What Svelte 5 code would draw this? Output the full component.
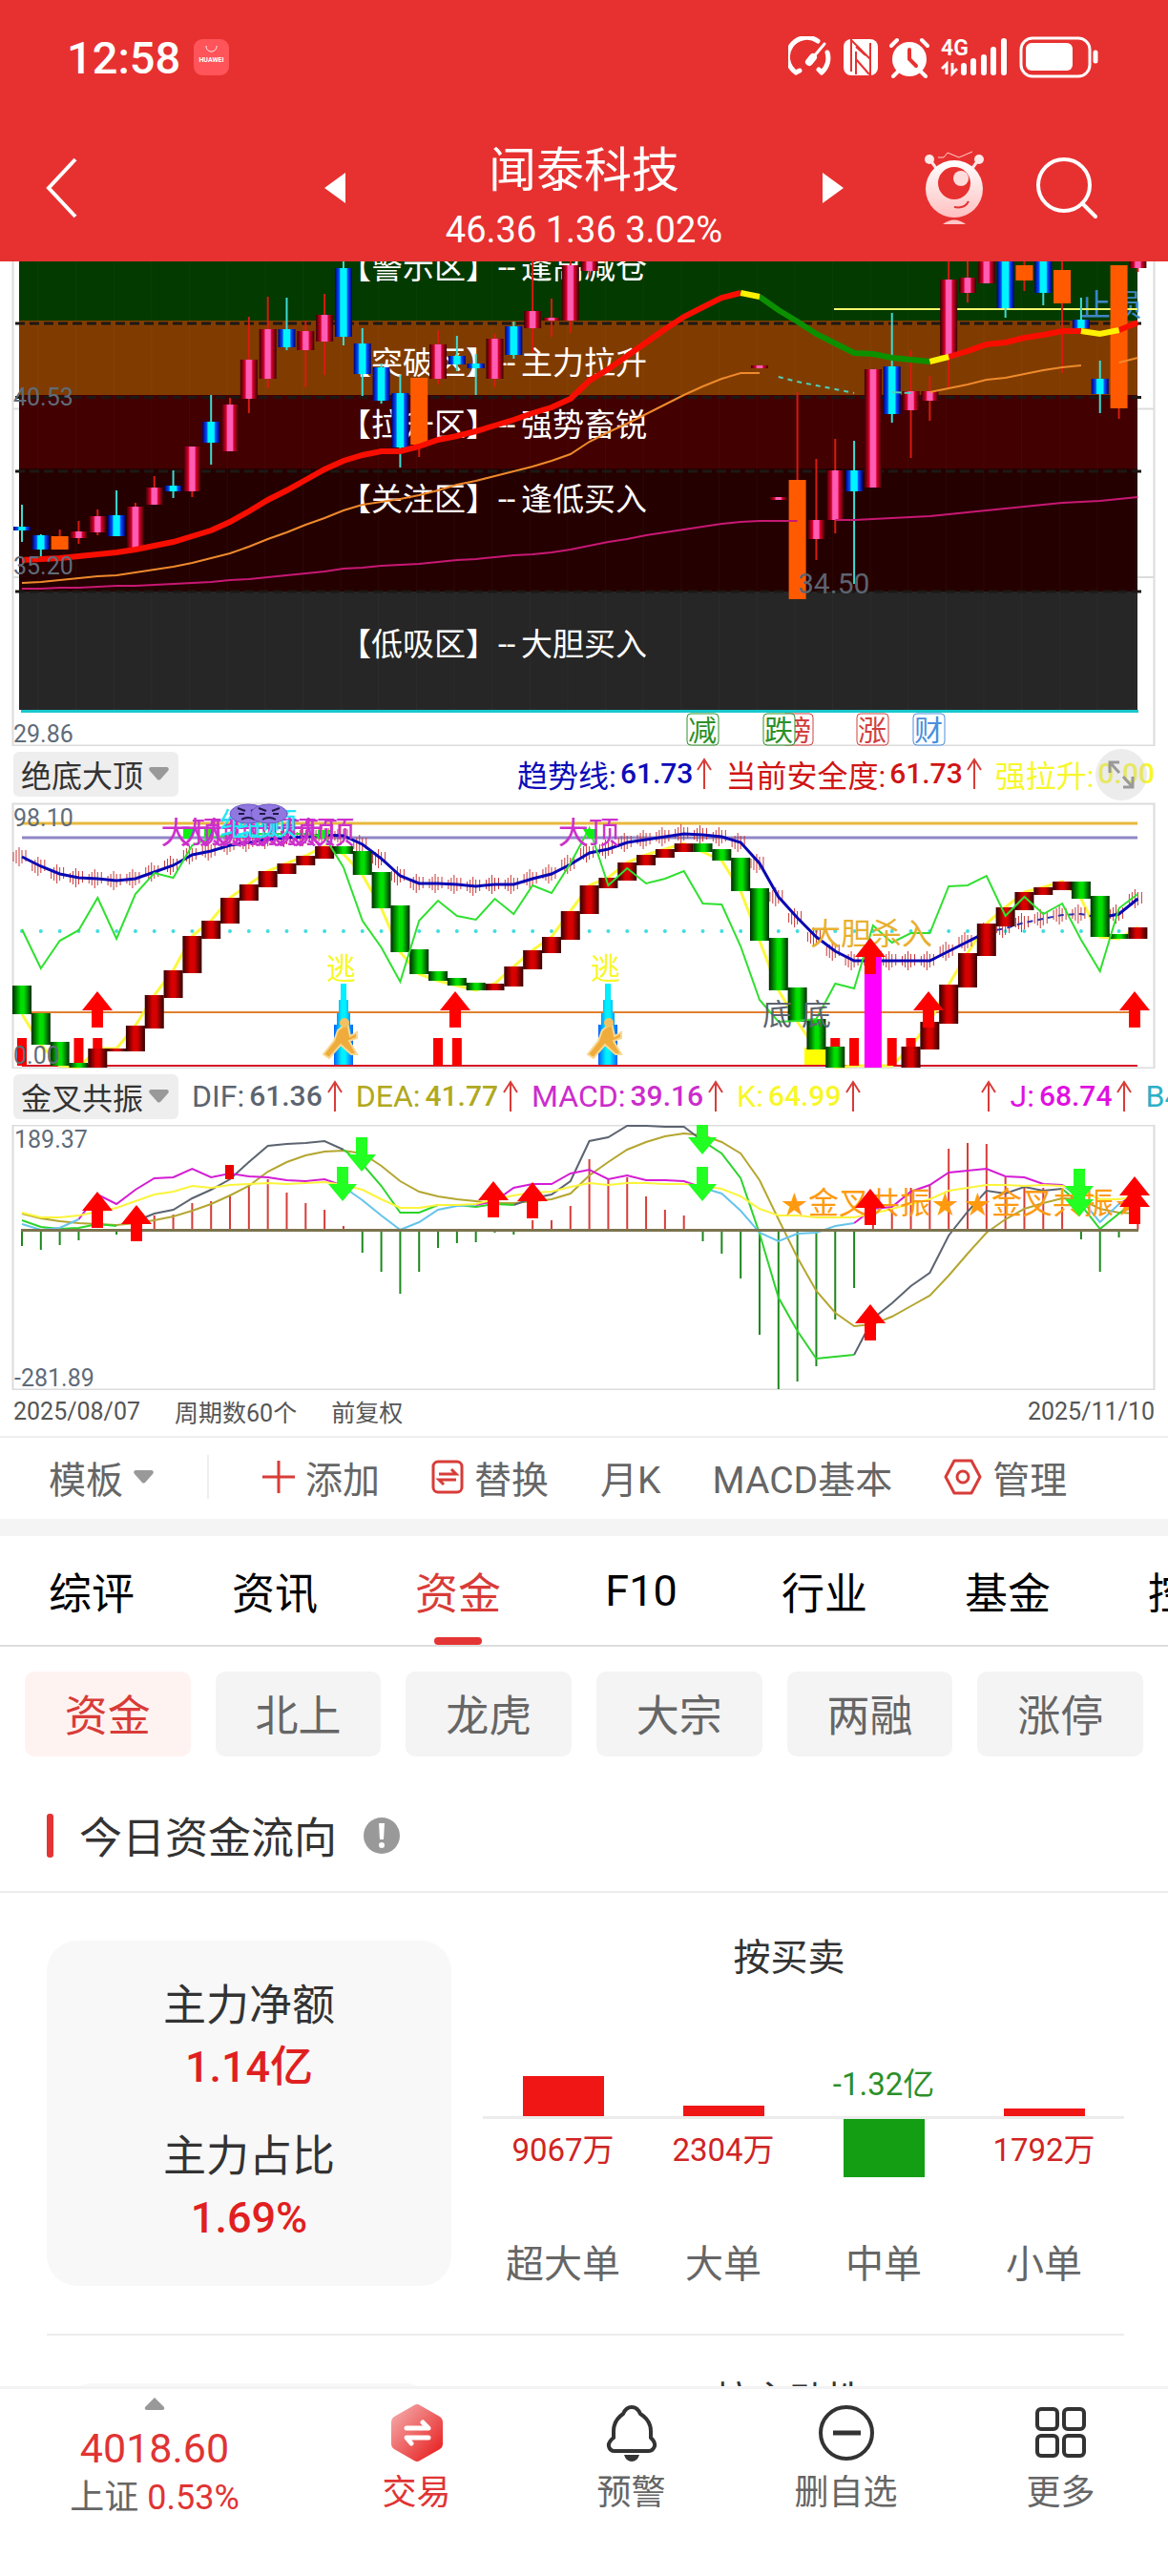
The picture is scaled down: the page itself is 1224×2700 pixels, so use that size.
<script lang="ts">
  type Candle = ['u' | 'd' | 'o', number, number, number, number];
  type Line = { from: number; ys: number[]; color: string; width: number; dash?: string };

  const x = (i: number) => 23 + 19.82 * i;
  const pts = (from: number, ys: number[]) => ys.map((y, k) => `${x(from + k).toFixed(1)},${y}`).join(' ');
  const upArrow = (cx: number, y: number) =>
    `M${cx} ${y}l16 20h-10v18h-12v-18h-10z`;
  const downArrow = (cx: number, y: number) =>
    `M${cx} ${y}l-15 -18h9v-18h12v18h9z`;

  const bands = [
    { y: 4, h: 62, fill: '#033a00' },
    { y: 66, h: 78, fill: '#803c00' },
    { y: 144, h: 77, fill: '#420000' },
    { y: 221, h: 129, fill: '#250000' },
    { y: 350, h: 124, fill: '#262626' },
  ];
  const zones = [
    { y: 22, name: '【警示区】', tip: '逢高减仓' },
    { y: 122, name: '【突破区】', tip: '主力拉升' },
    { y: 187, name: '【拉升区】', tip: '强势畜锐' },
    { y: 265, name: '【关注区】', tip: '逢低买入' },
    { y: 417, name: '【低吸区】', tip: '大胆买入' },
  ];

  // kind, high, body top, body bottom, low
  const candles: (Candle | null)[] = [
    ['d', 259, 282, 286, 298], ['d', 290, 291, 306, 313], ['o', 285, 292, 306, 306], ['u', 276, 287, 294, 300],
    ['u', 264, 271, 288, 291], ['d', 244, 270, 292, 292], ['u', 257, 261, 304, 304], ['u', 229, 241, 259, 259],
    ['d', 223, 239, 245, 252], ['u', 198, 198, 245, 251], ['d', 144, 172, 194, 217], ['u', 147, 154, 203, 203],
    ['u', 62, 107, 148, 163], ['u', 41, 75, 127, 137], ['d', 42, 75, 94, 97], ['u', 66, 77, 97, 136],
    ['u', 38, 60, 88, 123], ['d', 0, 11, 83, 92], ['d', 74, 90, 122, 145], ['d', 111, 115, 150, 153],
    ['d', 123, 142, 199, 220], ['o', 126, 126, 196, 209], ['u', 76, 91, 127, 133], ['d', 82, 103, 112, 119],
    ['d', 101, 111, 116, 144], ['u', 80, 85, 127, 136], ['d', 67, 72, 102, 106], ['u', 0, 56, 74, 100],
    ['u', 43, 63, 66, 83], ['u', 0, 8, 66, 79], ['u', 0, 0, 14, 20], null, null, null, null, null, null, null, null,
    ['u', 113, 113, 116, 116], ['u', 251, 251, 254, 254], ['o', 141, 233, 358, 358], ['u', 211, 275, 295, 317],
    ['u', 190, 223, 275, 289], ['d', 192, 223, 245, 342], ['u', 117, 117, 241, 241], ['d', 58, 114, 164, 173],
    ['u', 97, 140, 160, 210], ['u', 124, 140, 150, 171], ['u', 0, 23, 102, 136], ['u', 0, 21, 37, 47],
    ['u', 0, 0, 27, 27], ['d', 0, 0, 53, 63], ['o', 0, 8, 24, 35], ['d', 0, 0, 37, 50], ['o', 0, 13, 48, 121],
    ['d', 42, 65, 74, 74], ['d', 108, 127, 143, 163], ['o', 8, 8, 158, 169], ['u', 0, 0, 11, 15],
  ];
  const candleFill = { u: 'url(#pink)', d: 'url(#cyan)', o: '#ff5a00' };

  const priceLines: Line[] = [
    { from: 0, color: '#ef8a2c', width: 2, ys: [341, 340, 338, 336, 334, 333, 330, 327, 324, 320, 315, 310, 303, 295, 288, 280, 273, 265, 259, 256, 253, 249, 244, 238, 234, 229, 224, 219, 213, 206, 193, 183, 174, 164, 154, 144, 135, 127, 121, 121] },
    { from: 48, color: '#ef8a2c', width: 2, ys: [141, 137, 133, 128, 126, 122, 118, 115, 113] },
    { from: 58, color: '#ef8a2c', width: 2, ys: [110, 105] },
    { from: 40, color: '#4fd0b8', width: 2, dash: '5 5', ys: [125, 130, 134, 138, 142] },
    { from: 46, color: '#4fd0b8', width: 2, dash: '10 3', ys: [141, 142] },
    { from: 0, color: '#c81874', width: 2, ys: [347, 347, 346, 346, 345, 344, 344, 343, 342, 341, 340, 338, 337, 335, 333, 331, 329, 326, 325, 323, 322, 321, 319, 317, 316, 314, 312, 311, 309, 306, 302, 298, 295, 291, 288, 285, 282, 279, 277, 276, 276, 276] },
    { from: 43, color: '#c81874', width: 2, ys: [275, 275, 274, 273, 272, 271, 269, 267, 265, 263, 261, 259, 257, 256, 255, 253, 251] },
    { from: 0, color: '#f80e00', width: 6, ys: [317, 316, 315, 313, 311, 309, 306, 302, 298, 292, 286, 277, 266, 254, 244, 233, 222, 213, 207, 203, 203, 198, 191, 187, 182, 176, 170, 163, 157, 148, 129, 117, 103, 89, 75, 62, 52, 42, 37] },
    { from: 39, color: '#0c9000', width: 6, ys: [41, 55, 67, 80, 90, 100, 101, 105, 107, 109] },
    { from: 49, color: '#f80e00', width: 6, ys: [104, 98, 91, 89, 84, 81, 77, 77] },
    { from: 58, color: '#f80e00', width: 6, ys: [76, 68] },
    { from: 38, color: '#fff200', width: 6, ys: [37, 41] },
    { from: 48, color: '#fff200', width: 6, ys: [109, 104] },
    { from: 56, color: '#fff200', width: 6, ys: [77, 80, 76] },
  ];
  const tags = [
    { x: 818, text: '榜', color: '#d0403c' },
    { x: 719, text: '减', color: '#2c9028' },
    { x: 799, text: '跌', color: '#2c9028' },
    { x: 897, text: '涨', color: '#d0403c' },
    { x: 956, text: '财', color: '#4a8fdc' },
  ];

  const trend = [118, 128, 136, 140, 141, 143, 141, 134, 127, 116, 112, 106, 103, 100, 98, 97, 95, 96, 105, 120, 138, 146, 146, 147, 149, 147, 147, 141, 136, 126, 114, 110, 103, 100, 97, 94, 95, 97, 103, 125, 160, 182, 202, 217, 227, 227, 227, 227, 227, 217, 207, 197];
  const trendEnd = [197, 193, 187, 183, 179, 178, 182, 178, 162];
  const safety = [194, 235, 206, 195, 161, 204, 157, 135, 140, 106, 98, 95, 94, 94, 94, 94, 97, 129, 185, 213, 249, 185, 164, 180, 184, 162, 178, 148, 156, 125, 88, 148, 130, 146, 141, 133, 167, 168, 212, 268, 291, 290, 288, 251, 256, 190, 208, 198, 198, 149, 148, 138, 180, 160, 178, 167, 205, 238, 172, 157];
  const blocks: (['g' | 'r', number, number] | null)[] = [
    ['g', 253, 283], ['g', 282, 315], ['g', 312, 337], ['g', 334, 339], ['r', 319, 339], ['r', 319, 322], ['r', 295, 322],
    ['r', 263, 298], ['r', 237, 266], ['r', 201, 240], ['r', 185, 204], ['r', 161, 188], ['r', 147, 164], ['r', 133, 150],
    ['r', 125, 136], ['r', 117, 127], ['r', 107, 120], ['g', 107, 115], ['g', 112, 137], ['g', 134, 172], ['g', 169, 218],
    ['g', 215, 241], ['g', 238, 248], ['g', 245, 253], ['g', 250, 258], ['r', 251, 258], ['r', 233, 254], ['r', 216, 236],
    ['r', 202, 219], ['r', 175, 205], ['r', 148, 178], ['r', 140, 151], ['r', 124, 143], ['r', 116, 127], ['r', 110, 119],
    ['r', 104, 113], ['g', 104, 113], ['g', 110, 122], ['g', 119, 154], ['g', 151, 206], ['g', 203, 258], ['g', 255, 291],
    ['g', 288, 320], ['g', 317, 339], null, null, null, ['r', 317, 339], ['r', 291, 320], ['r', 252, 293], ['r', 219, 255],
    ['r', 188, 222], ['r', 171, 191], ['r', 155, 174], ['r', 150, 158], ['r', 144, 153], ['g', 144, 162], ['g', 159, 202],
    ['g', 199, 204], ['r', 192, 204],
  ];
  const step = blocks.map((b) => (b ? (b[0] === 'g' ? b[2] : b[1]) : 337));
  const redBars = [0, 3, 4, 22, 23, 43, 44, 46, 47];
  const spikes = [360, 637];

  const hist = [186, 190, 185, 180, 169, 174, 169, 154, 153, 141, 139, 132, 122, 116, 130, 141, 148, 165, 193, 213, 236, 213, 188, 183, 182, 172, 174, 159, 159, 144, 95, 116, 114, 134, 148, 154, 181, 194, 220, 279, 336, 328, 312, 263, 230, 150, 147, 125, 122, 84, 78, 79, 114, 125, 125, 145, 179, 213, 177, 150];
  const waves: Line[] = [
    { from: 0, color: '#b4a630', width: 2, ys: [152, 157, 160, 162, 163, 164, 162, 159, 155, 149, 142, 133, 123, 108, 98, 91, 87, 86, 89, 102, 118, 129, 134, 137, 139, 141, 141, 139, 137, 131, 112, 98, 85, 77, 71, 68, 70, 77, 89, 117, 158, 198, 233, 256, 270, 268, 260, 249, 238, 217, 194, 172, 158, 147, 141, 136, 137, 147, 151, 152] },
    { from: 6, color: '#5c6470', width: 2, ys: [160, 152, 148, 136, 127, 116, 98, 81, 79, 78, 76, 85] },
    { from: 26, color: '#5c6470', width: 2, ys: [143, 136, 132, 118, 76, 72, 60, 60, 61, 61, 76] },
    { from: 44, color: '#5c6470', width: 2, ys: [300, 262, 246, 228, 214, 175, 150, 128, 131, 124, 128, 126] },
    { from: 0, color: '#2cd42c', width: 2, ys: [159, 166, 168, 167, 163, 165] },
    { from: 17, color: '#2cd42c', width: 2, ys: [85, 100, 123, 151, 151, 143, 143, 145, 142, 143] },
    { from: 36, color: '#2cd42c', width: 2, ys: [76, 89, 115, 173, 240, 275, 304, 302, 300] },
    { from: 55, color: '#2cd42c', width: 2, ys: [126, 143, 168, 152, 137] },
    { from: 3, color: '#d41cd4', width: 2, ys: [158, 132, 142, 127, 115, 114, 105, 114, 110, 113, 114, 117, 118, 116, 123] },
    { from: 24, color: '#d41cd4', width: 2, ys: [143, 139, 125, 121, 121, 110, 106, 116, 112, 117, 117, 118, 125] },
    { from: 44, color: '#d41cd4', width: 2, ys: [162, 147, 145, 129, 122, 109, 107, 105, 113, 114, 121, 122, 133] },
    { from: 58, color: '#d41cd4', width: 2, ys: [142, 130] },
    { from: 0, color: '#66c4ea', width: 2, ys: [163, 169, 167, 158] },
    { from: 17, color: '#66c4ea', width: 2, ys: [124, 138, 154, 169, 161, 148, 144, 143] },
    { from: 36, color: '#66c4ea', width: 2, ys: [125, 131, 149, 172, 181, 173, 172, 165, 162] },
    { from: 55, color: '#66c4ea', width: 2, ys: [122, 137, 161, 142] },
    { from: 0, color: '#fbf43c', width: 2, ys: [151, 156, 156, 154, 150, 146, 139, 132, 129, 123, 125, 122, 121, 120, 121, 120, 119, 122, 127, 137, 146, 146, 143, 143, 142, 137, 133, 130, 129, 124, 120, 122, 120, 120, 121, 121, 123, 126, 134, 147, 154, 154, 156, 156, 156, 152, 147, 142, 137, 128, 125, 122, 122, 123, 122, 123, 128, 137, 137, 134] },
  ];
  const ups = [[102, 129], [143, 143], [517, 118], [558, 119], [912, 126], [912, 247], [1189, 113], [1189, 125]];
  const downs = [[379, 108], [359, 139], [736, 90], [736, 139], [1131, 141], [1131, 155]];

  const trendLegend = [
    { name: '趋势线:', value: '61.73', color: '#0c0cb8', rise: true },
    { name: '当前安全度:', value: '61.73', color: '#d01414', rise: true },
    { name: '强拉升:', value: '0.00', color: '#f7f72a', rise: false },
  ];
  const macdLegend = [
    { name: 'DIF:', value: '61.36', color: '#5c6470' },
    { name: 'DEA:', value: '41.77', color: '#b0a820' },
    { name: 'MACD:', value: '39.16', color: '#cc2ccc' },
    { name: 'K:', value: '64.99', color: '#f7f72a' },
    { name: '', value: '', color: '#fff' },
    { name: 'J:', value: '68.74', color: '#e010e0' },
  ];

  const tabs = ['综评', '资讯', '资金', 'F10', '行业', '基金', '控股'];
  const subTabs = ['资金', '北上', '龙虎', '大宗', '两融', '涨停'];
  let tab = $state('资金');
  let subTab = $state('资金');

  const orders = [
    { name: '超大单', value: '9067万', size: 42, up: true },
    { name: '大单', value: '2304万', size: 11, up: true },
    { name: '中单', value: '-1.32亿', size: 61, up: false },
    { name: '小单', value: '1792万', size: 8, up: true },
  ];
</script>

{#snippet polys(lines: Line[])}
  {#each lines as l}
    <polyline points={pts(l.from, l.ys)} fill="none" stroke={l.color} stroke-width={l.width} stroke-dasharray={l.dash} />
  {/each}
{/snippet}

{#snippet riseIcon()}
  <svg class="rise" viewBox="0 0 16 34"><path d="M8 33V3M1 13L8 2l7 11" /></svg>
{/snippet}

<div class="app">
  <header>
    <div class="status">
      <span class="clock">12:58</span>
      <svg width="37" height="38" viewBox="0 0 37 38">
        <rect width="37" height="38" rx="9" fill="#ff5459" />
        <path d="M13 7c0 8 11 8 11 0" fill="none" stroke="#fff" stroke-width="1" />
        <text x="18.5" y="24" font-size="7" font-weight="700" fill="#fff" text-anchor="middle">HUAWEI</text>
      </svg>
      <div class="system">
        <svg width="46" height="44" viewBox="0 0 46 44" fill="none" stroke="#fff" stroke-width="5" stroke-linecap="round">
          <path d="M31 5A19 19 0 0 0 8 38M41 17a20 20 0 0 1-6 21M8 38l4-2M35 38l-3-3" />
          <path d="M22 27L38 8" stroke-width="3" /><path d="M22 27l4-5" stroke-width="8" />
        </svg>
        <svg width="36" height="44" viewBox="0 0 36 44">
          <rect y="3" width="36" height="38" rx="8" fill="#fff" />
          <path d="M8 3v34M28 7v34" stroke="#e73130" stroke-width="2" />
          <path d="M8 4l20 20M13 16v24M13 24l14 16M23 20l-10-9" fill="none" stroke="#e73130" stroke-width="2" />
        </svg>
        <svg width="42" height="44" viewBox="0 0 42 44" stroke-linecap="round">
          <circle cx="21" cy="24" r="18" fill="#fff" />
          <path d="M2 10l6-6M40 10l-6-6M9 37l-5 5M33 37l5 5" stroke="#fff" stroke-width="4" />
          <path d="M21 14v10l7 7" fill="none" stroke="#e73130" stroke-width="4" />
        </svg>
        <svg width="70" height="44" viewBox="0 0 70 44">
          <text x="0" y="20" font-size="23" font-weight="600" fill="#fff">4G</text>
          <path d="M1 34l5-5v11M17 34l-5 5V28" fill="none" stroke="#fff" stroke-width="3" />
          <path d="M24 31v7M34 26v12M45 22v16M55 14v24M66 5v33" stroke="#fff" stroke-width="6" stroke-linecap="round" />
        </svg>
        <svg width="84" height="44" viewBox="0 0 84 44">
          <rect x="2" y="2" width="72" height="40" rx="12" fill="none" stroke="#fff" stroke-width="3" />
          <rect x="7" y="7" width="49" height="29" rx="6" fill="#fff" />
          <path d="M80 17v9" stroke="#fff" stroke-width="5" stroke-linecap="round" />
        </svg>
      </div>
    </div>
    <div class="nav">
      <div class="side left">
        <button aria-label="返回"><svg width="34" height="64" viewBox="0 0 34 64"><path d="M31 2L3 32l28 30" fill="none" stroke="#fff" stroke-width="4" /></svg></button>
        <button aria-label="上一只"><svg width="22" height="32" viewBox="0 0 22 32"><path d="M22 0v32L0 16z" fill="#fff" /></svg></button>
      </div>
      <div class="stock">
        <h1>闻泰科技</h1>
        <p>46.36 1.36 3.02%</p>
      </div>
      <div class="side right">
        <button aria-label="下一只"><svg width="22" height="32" viewBox="0 0 22 32"><path d="M0 0v32l22-16z" fill="#fff" /></svg></button>
        <button class="robot" aria-label="智能助手">
          <svg width="64" height="78" viewBox="0 0 64 78">
            <defs><linearGradient id="skin" x2="0" y2="1"><stop stop-color="#fff" /><stop offset="1" stop-color="#ffc0c0" /></linearGradient></defs>
            <path d="M7 10l8 11M57 10l-8 11" stroke="#ffe4e4" stroke-width="3" />
            <circle cx="6" cy="9" r="5" fill="#ffe8e8" /><circle cx="58" cy="9" r="5" fill="#ffe8e8" />
            <path d="M15 7h6l4-5 12 5 14-6" fill="none" stroke="#ffd0d0" stroke-width="1" />
            <circle cx="32" cy="40" r="30" fill="url(#skin)" />
            <circle cx="32" cy="34" r="17" fill="#e73130" /><circle cx="39" cy="29" r="8" fill="#ffdcdc" />
            <path d="M32 59q11 2 15-6" fill="none" stroke="#e73130" stroke-width="2" />
            <path d="M20 77q12-9 24 0z" fill="#ffc8c8" />
          </svg>
        </button>
        <button aria-label="搜索"><svg width="66" height="66" viewBox="0 0 66 66" fill="none" stroke="#fff" stroke-width="4" stroke-linecap="round"><circle cx="30" cy="30" r="27" /><path d="M49 49l14 14" /></svg></button>
      </div>
    </div>
  </header>

  <main>
    <svg class="chart" viewBox="0 4 1224 508">
      <defs>
        <linearGradient id="pink"><stop stop-color="#3a0000" /><stop offset=".28" stop-color="#d8002c" /><stop offset=".36" stop-color="#ff5cb4" /><stop offset=".64" stop-color="#ff5cb4" /><stop offset=".72" stop-color="#d8002c" /><stop offset="1" stop-color="#3a0000" /></linearGradient>
        <linearGradient id="cyan"><stop stop-color="#000078" /><stop offset=".25" stop-color="#0050ff" /><stop offset=".33" stop-color="#00f4ff" /><stop offset=".67" stop-color="#00f4ff" /><stop offset=".75" stop-color="#0050ff" /><stop offset="1" stop-color="#000078" /></linearGradient>
        <linearGradient id="green"><stop stop-color="#002a00" /><stop offset=".45" stop-color="#00e000" /><stop offset=".6" stop-color="#00e000" /><stop offset="1" stop-color="#002a00" /></linearGradient>
        <linearGradient id="red"><stop stop-color="#300000" /><stop offset=".4" stop-color="#d80000" /><stop offset=".6" stop-color="#d80000" /><stop offset="1" stop-color="#300000" /></linearGradient>
        <linearGradient id="spike"><stop stop-color="#0060ff" /><stop offset=".4" stop-color="#00f0ff" /><stop offset=".6" stop-color="#00f0ff" /><stop offset="1" stop-color="#0060ff" /></linearGradient>
      </defs>
      <path d="M13.5 0V511.500H1209.500V0M13.500 158.500H1209M13.500 335H1209" class="frame" />
      {#each bands as b}<rect x="20" y={b.y} width="1172" height={b.h} fill={b.fill} />{/each}
      {#each candles as _, i}{#if i % 2 === 0}<path d="M{x(i) + 17} 4V474" stroke="#fff" stroke-opacity=".03" />{/if}{/each}
      <path d="M16 69H1198M16 146.500H1198M16 224H1198M16 350H1198" stroke="#1c1815" stroke-width="3" stroke-dasharray="10 5" />
      <path d="M22 475.500H1193" stroke="#18c8cc" stroke-width="3" />
      {#each zones as z}
        <text class="zone" y={z.y}><tspan x="356">{z.name}</tspan><tspan x="522">--</tspan><tspan x="546">{z.tip}</tspan></text>
      {/each}
      <text x="1132" y="61" font-size="32" fill="#3f86c4">止损</text>
      <path d="M874 54H1192" stroke="#f4f86c" stroke-width="2" />
      {#each candles as c, i}
        {#if c}
          <path d="M{x(i)} {c[1]}V{c[4]}" stroke={c[0] === 'd' ? '#3cdcd4' : '#d81a10'} stroke-width="2" />
          <rect x={x(i) - 9} y={c[2]} width="18" height={c[3] - c[2]} fill={candleFill[c[0]]} />
        {/if}
      {/each}
      {@render polys(priceLines)}
      <text class="axis" x="14" y="155">40.53</text>
      <text class="axis" x="14" y="332">35.20</text>
      <text class="axis" x="14" y="508">29.86</text>
      <text x="836" y="352" font-size="30" fill="#5c6470">34.50</text>
      {#each tags as t}
        <rect x={t.x + 1} y="478" width="33" height="33" rx="4" fill="#fff" stroke={t.color} />
        <text x={t.x + 2} y="506" font-size="30" fill={t.color}>{t.text}</text>
      {/each}
    </svg>

    <div class="legend end">
      <button class="picker">绝底大顶<svg class="caret" viewBox="0 0 21 14"><path d="M2 0h17q3 1 1 4l-8 9q-2 1-3 0L1 4Q-1 1 2 0z" /></svg></button>
      {#each trendLegend as l}
        <span class="item" style:color={l.color}>{l.name}<b>{l.value}</b>{#if l.rise}{@render riseIcon()}{/if}</span>
      {/each}
      <button class="expand" aria-label="全屏"><svg width="28" height="30" viewBox="0 0 28 30" fill="none" stroke="#999" stroke-width="3"><path d="M2 13V2h10M2 2l10 11M26 17v11H16M26 28L16 17" /></svg></button>
    </div>

    <svg class="chart" viewBox="0 61 1224 279">
      <path d="M13.500 62.500H1209.500V339.500H13.500Z" class="frame" />
      <path d="M23 83H1192" stroke="#e8b83c" stroke-width="3" />
      <path d="M23 98H1192" stroke="#9088c8" stroke-width="3" />
      {#each blocks as _, i}<circle cx={x(i)} cy="196" r="2" fill="#40dce0" />{/each}
      <path d="M23 281H1192" stroke="#e08030" stroke-width="2" />
      <path d="M23 337H1192" stroke="#d81424" stroke-width="2" />
      <polyline points={pts(0, step)} fill="none" stroke="#fbf83c" stroke-width="3" />
      {#each redBars as i}<rect x={x(i) - 5} y="308" width="10" height="29" fill="#f80000" />{/each}
      <rect x="843" y="318" width="23" height="18" fill="#ff0" />
      {#each [...trend, ...trendEnd.slice(1)] as y, i}
        <path d="M{x(i) - 9} {y - 5}v10M{x(i) - 6} {y - 7}v14M{x(i) - 3} {y - 10}v20M{x(i)} {y - 7}v14M{x(i) + 4} {y - 7}v12" stroke="#c83838" />
      {/each}
      <polyline points={pts(0, trend)} fill="none" stroke="#0808b4" stroke-width="3" />
      <polyline points={pts(51, trendEnd.slice(0, 7))} fill="none" stroke="#3030a8" stroke-width="2" stroke-dasharray="6 5" />
      <polyline points={pts(57, trendEnd.slice(6))} fill="none" stroke="#0808b4" stroke-width="3" />
      {#each blocks as b, i}
        {#if b}<rect x={x(i) - 10} y={b[1]} width="20" height={b[2] - b[1]} fill={b[0] === 'g' ? 'url(#green)' : 'url(#red)'} />{/if}
      {/each}
      <rect x={x(45) - 9} y="217" width="18" height="122" fill="#f0f" />
      <polyline points={pts(0, safety)} fill="none" stroke="#30e030" stroke-width="2" />
      <path d="M192 89h12l-4 10h-8zM214 89h9v9h-9zM333 90h14l-5 9h-9zM611 89h15v10h-9z" fill="#10f010" />
      {#each [8, 9, 10, 11, 12, 13, 14, 15, 29] as i}<text x={x(i) - 13} y="104" font-size="32" fill="#cc30cc">大顶</text>{/each}
      {#each [230, 247] as tx}<text x={tx} y="95" font-size="32" fill="#20e8f4">绝顶</text>{/each}
      {#each [260, 282] as cx}
        <ellipse {cx} cy="73" rx="19" ry="10" fill="#9078e0" stroke="#7058c8" />
        <path d="M{cx - 11} 67l8 3M{cx + 11} 67l-8 3M{cx - 10} 73h6M{cx + 4} 73h6M{cx - 7} 79q7-4 14 0" fill="none" stroke="#201848" stroke-width="2" />
      {/each}
      {#each spikes as s}
        <text x={s - 18} y="246" font-size="31" fill="#f7f72a">逃</text>
        <path d="M{s - 3} 251h6v17h2v14h2v12h3v42h-20v-42h3v-12h2v-14h2z" fill="url(#spike)" />
        <path d="M{s - 6} 300l10-8 3 14 7-4v6l-8 3 8 14h-6l-11-10-12 14-6-4 11-14z" fill="#efac3c" stroke="#f8d890" stroke-width="2" />
        <circle cx={s + 1} cy="292" r="5" fill="#f4c060" />
      {/each}
      <text x="799" y="294" font-size="31" fill="#5c6470">底</text>
      <text x="840" y="294" font-size="31" fill="#5c6470">底</text>
      <text x="849" y="210" font-size="32" fill="#e8b030">大胆杀入</text>
      {#each [[102, 259], [477, 259], [973, 259], [1189, 259], [912, 203]] as [cx, y]}<path d={upArrow(cx, y)} fill="#f00" />{/each}
      <text class="axis" x="14" y="86">98.10</text>
      <text class="axis" x="14" y="335">0.00</text>
    </svg>

    <div class="legend">
      <button class="picker">金叉共振<svg class="caret" viewBox="0 0 21 14"><path d="M2 0h17q3 1 1 4l-8 9q-2 1-3 0L1 4Q-1 1 2 0z" /></svg></button>
      {#each macdLegend as l}
        <span class="item" class:blank={!l.name} style:color={l.color}>{l.name} <b>{l.value}</b>{@render riseIcon()}</span>
      {/each}
      <span class="item" style:color="#2cb0c8">B4:</span>
    </div>

    <svg class="chart" viewBox="0 59 1224 278">
      <path d="M13.500 59.500H1209.500V336.500H13.500Z" class="frame" />
      {#each hist as y, i}<path d="M{x(i)} 169V{y}" stroke={y < 169 ? '#d83c38' : '#1c881c'} stroke-width="2" />{/each}
      {@render polys(waves)}
      <path d="M22 169.500H1193" stroke="#7c7450" stroke-width="3" />
      <rect x="236" y="101" width="9" height="15" fill="#e80000" />
      <g fill="#ff9a10">
        {#each [821, 1013] as sx}
          <text x={sx - 2} y="152" font-size="27">★</text>
          <text x={sx + 26} y="152" font-size="32">金叉共振</text>
          <text x={sx + 156} y="152" font-size="27">★</text>
        {/each}
      </g>
      {#each ups as [cx, y]}<path d={upArrow(cx, y)} fill="#f00" />{/each}
      {#each downs as [cx, y]}<path d={downArrow(cx, y)} fill="#2f2" />{/each}
      <text class="axis" x="15" y="83">189.37</text>
      <text class="axis" x="15" y="333">-281.89</text>
    </svg>

    <div class="dates">
      <span>2025/08/07</span><span>周期数60个</span><span>前复权</span><span>2025/11/10</span>
    </div>

    <div class="tools">
      <button>模板<svg class="caret" viewBox="0 0 21 14"><path d="M2 0h17q3 1 1 4l-8 9q-2 1-3 0L1 4Q-1 1 2 0z" /></svg></button>
      <i class="sep"></i>
      <button><svg width="34" height="34" viewBox="0 0 34 34"><path d="M17 0v34M0 17h34" /></svg>添加</button>
      <button><svg width="34" height="36" viewBox="0 0 34 36"><rect x="2" y="2" width="30" height="32" rx="5" /><path d="M8 15h18l-5-5M26 21H8l5 5" /></svg>替换</button>
      <button>月K</button>
      <button>MACD基本</button>
      <button><svg width="40" height="38" viewBox="0 0 40 38"><path d="M11 2h18l9 17-9 17H11L2 19z" stroke-linejoin="round" /><circle cx="20" cy="19" r="6" /></svg>管理</button>
    </div>

    <nav class="tabs">
      {#each tabs as t}
        <button class:active={t === tab} onclick={() => (tab = t)}>{t}</button>
      {/each}
    </nav>
    <div class="subtabs">
      {#each subTabs as t}
        <button class:active={t === subTab} onclick={() => (subTab = t)}>{t}</button>
      {/each}
    </div>

    <h2>今日资金流向
      <svg width="40" height="40" viewBox="0 0 40 40"><circle cx="20" cy="20" r="19" fill="#999" /><path d="M17 7h6l-1 17h-4z" fill="#fff" /><circle cx="20" cy="30" r="3" fill="#fff" /></svg>
    </h2>

    <section class="flow">
      <div class="card">
        <span>主力净额</span><strong>1.14亿</strong>
        <span>主力占比</span><strong>1.69%</strong>
      </div>
      <div class="orders">
        <h3>按买卖</h3>
        <div class="bars">
          {#each orders as o}
            <div class="col" class:down={!o.up}>
              <div class="half top">{#if o.up}<i style:height="{o.size}px"></i>{:else}<em>{o.value}</em>{/if}</div>
              <div class="half">{#if o.up}<em>{o.value}</em>{:else}<i style:height="{o.size}px"></i>{/if}</div>
              <span>{o.name}</span>
            </div>
          {/each}
        </div>
      </div>
    </section>
    <section class="flow next">
      <div class="card"></div>
      <div class="orders"><h3>按主动性</h3></div>
    </section>
  </main>

  <footer>
    <button class="index">
      <svg width="22" height="13" viewBox="0 0 22 13"><path d="M11 0l10 10q1 3-2 3H3q-3 0-2-3z" fill="#999" /></svg>
      <strong>4018.60</strong>
      <span>上证 <b>0.53%</b></span>
    </button>
    <button class="trade">
      <svg width="60" height="60" viewBox="0 0 60 60">
        <defs><linearGradient id="hex" y2="1"><stop offset=".1" stop-color="#f4a4a4" /><stop offset=".9" stop-color="#e82424" /></linearGradient></defs>
        <path d="M27 1q3-2 6 0l21 12q3 2 3 5v24q0 3-3 5L33 59q-3 2-6 0L6 47q-3-2-3-5V18q0-3 3-5z" fill="url(#hex)" />
        <path d="M19 25h23l-6-6M42 35H19l5 6" fill="none" stroke="#fff" stroke-width="5" stroke-linecap="round" stroke-linejoin="round" />
      </svg>交易
    </button>
    <button>
      <svg width="60" height="60" viewBox="0 0 60 60">
        <path d="M21 10q3-7 9-7t9 7q11 7 11 18v7q5 5 4 9-2 5-6 5H12q-5 0-6-5-1-4 5-9v-7q0-11 10-18z" fill="none" stroke="#333" stroke-width="4" />
        <path d="M22 53h16q-2 7-8 7t-8-7z" fill="#333" />
      </svg>预警
    </button>
    <button>
      <svg width="60" height="60" viewBox="0 0 60 60" fill="none" stroke="#333" stroke-width="4"><circle cx="30" cy="30" r="27" /><path d="M16 30h29" stroke-width="5" /></svg>删自选
    </button>
    <button>
      <svg width="60" height="60" viewBox="0 0 60 60" fill="none" stroke="#333" stroke-width="4">
        <rect x="5" y="5" width="21" height="21" rx="4" /><rect x="33" y="5" width="21" height="21" rx="4" />
        <rect x="5" y="33" width="21" height="21" rx="4" /><rect x="33" y="33" width="21" height="21" rx="4" />
      </svg>更多
    </button>
  </footer>
</div>

<style>
  .app { display: flex; flex-direction: column; height: 100vh; background: #fff; color: #333; font-family: Roboto, "Noto Sans CJK SC", sans-serif; }
  button { border: 0; padding: 0; background: none; color: inherit; font: inherit; }
  svg { display: block; flex: none; }
  h1, h2, h3, p { margin: 0; font-weight: 400; }

  header { flex: none; background: #e73130; color: #fff; }
  .status { display: flex; align-items: center; gap: 14px; height: 120px; padding: 0 72px 0 70px; }
  .clock { font-size: 47px; font-weight: 500; }
  .system { display: flex; align-items: center; gap: 12px; margin-left: auto; }
  .nav { display: grid; grid-template-columns: 1fr 500px 1fr; align-items: center; height: 154px; }
  .side { display: flex; align-items: center; }
  .left { justify-content: space-between; padding-left: 48px; }
  .right { padding-right: 73px; gap: 53px; }
  .robot { margin-left: auto; }
  .stock { padding-top: 20px; text-align: center; }
  h1 { font-size: 50px; line-height: 68px; }
  .stock p { font-size: 38px; line-height: 56px; }

  main { flex: 1; min-height: 0; overflow-y: auto; scrollbar-width: none; }
  .chart { width: 100%; height: auto; }
  .frame { fill: none; stroke: #dcdcdc; stroke-width: 2; }
  .zone { font-size: 33px; fill: #fff; }
  .axis { font-size: 25px; fill: #5f6c7a; }

  .legend { position: relative; display: flex; align-items: center; gap: 14px; height: 59px; padding: 0 14px; overflow: hidden; white-space: nowrap; font-size: 32px; }
  .picker { display: flex; flex: none; align-items: center; gap: 6px; box-sizing: border-box; height: 47px; padding: 0 10px 2px 8px; border-radius: 6px; background: #eee; color: #333; }
  .end .picker { margin-right: auto; }
  .item { display: flex; flex: none; align-items: center; gap: 4px; padding-bottom: 2px; }
  .item b { font-size: 30px; font-weight: 500; }
  .blank { width: 128px; justify-content: flex-end; }
  .rise { width: 16px; height: 34px; fill: none; stroke: #d83c38; stroke-width: 2; }
  .legend:not(.end) .item { gap: 5px; }
  .caret { width: 21px; height: 14px; fill: #999; }
  .expand { position: absolute; top: 3px; right: 22px; display: grid; place-items: center; width: 54px; height: 54px; border-radius: 50%; background: rgba(200, 200, 200, 0.35); }

  .dates { display: flex; align-items: center; gap: 36px; box-sizing: border-box; height: 48px; padding: 0 14px 4px; font-size: 25px; color: #555; }
  .dates span:last-child { margin-left: auto; }
  .tools { display: flex; align-items: center; gap: 54px; box-sizing: border-box; height: 105px; padding: 0 0 4px 51px; border-top: 2px solid #eee; border-bottom: 18px solid #f4f4f4; font-size: 39px; color: #666; white-space: nowrap; }
  .tools button { display: flex; flex: none; align-items: center; gap: 11px; }
  .tools svg:not(.caret) { fill: none; stroke: #d83c38; stroke-width: 3; }
  .sep { width: 2px; height: 46px; margin: 0 2px; background: #eee; }

  .tabs { display: flex; height: 114px; overflow: hidden; border-bottom: 2px solid #ddd; font-size: 45px; color: #000; }
  .tabs button { position: relative; flex: 0 0 192px; }
  .tabs .active { color: #d83c38; }
  .tabs .active::after { content: ""; position: absolute; left: 71px; bottom: 0; width: 50px; height: 8px; border-radius: 4px; background: #e43434; }
  .subtabs { display: grid; grid-template-columns: repeat(6, 1fr); gap: 26px; padding: 26px; font-size: 45px; color: #666; }
  .subtabs button { height: 89px; padding-bottom: 2px; border-radius: 10px; background: #f4f4f4; }
  .subtabs .active { background: #fff3f2; color: #d83c38; }

  h2 { display: flex; align-items: center; gap: 27px; box-sizing: border-box; height: 117px; padding: 0 0 2px 49px; border-bottom: 2px solid #ececec; font-size: 45px; }
  h2::before { content: ""; width: 7px; height: 46px; border-radius: 3px; background: #e43434; }
  .flow { display: grid; grid-template-columns: 424px 1fr; gap: 33px; margin: 0 46px 0 49px; padding: 50px 0; border-bottom: 2px solid #ececec; }
  .card { display: flex; flex-direction: column; align-items: center; min-height: 362px; box-sizing: border-box; padding-top: 37px; border-radius: 32px; background: #f8f8f8; font-size: 45px; line-height: 64px; }
  .card strong { font-weight: 500; color: #e02020; }
  .card span + strong + span { margin-top: 30px; }
  .orders { text-align: center; }
  h3 { padding-right: 30px; font-size: 39px; line-height: 36px; }
  .bars { display: grid; grid-template-columns: repeat(4, 1fr); margin-top: 46px; }
  .col { display: flex; flex-direction: column; align-items: center; color: #d02424; }
  .half { display: flex; flex-direction: column; align-items: center; width: 100%; height: 102px; }
  .col .half:nth-child(2) { height: 98px; }
  .top { justify-content: flex-end; border-bottom: 3px solid #ececec; }
  .half i { width: 85px; background: #f01616; }
  .half em { padding: 12px 0; font-size: 33px; font-style: normal; line-height: 42px; }
  .down { color: #2c9028; }
  .down i { background: #149e14; }
  .col span { margin-top: 33px; font-size: 40px; line-height: 44px; color: #666; }
  .next .card { margin: 0 16px; }

  footer { display: grid; flex: none; grid-template-columns: 324fr repeat(4, 225fr); height: 196px; border-top: 3px solid #f3f3f3; background: #fff; color: #666; font-size: 36px; }
  footer button { display: flex; flex-direction: column; align-items: center; gap: 9px; padding-top: 16px; line-height: 48px; }
  .index { gap: 0; padding-top: 9px; }
  .index strong { margin-top: 12px; font-size: 43px; font-weight: 400; line-height: 56px; }
  .index strong, .index b, .trade { font-weight: 400; color: #e03434; }
</style>
